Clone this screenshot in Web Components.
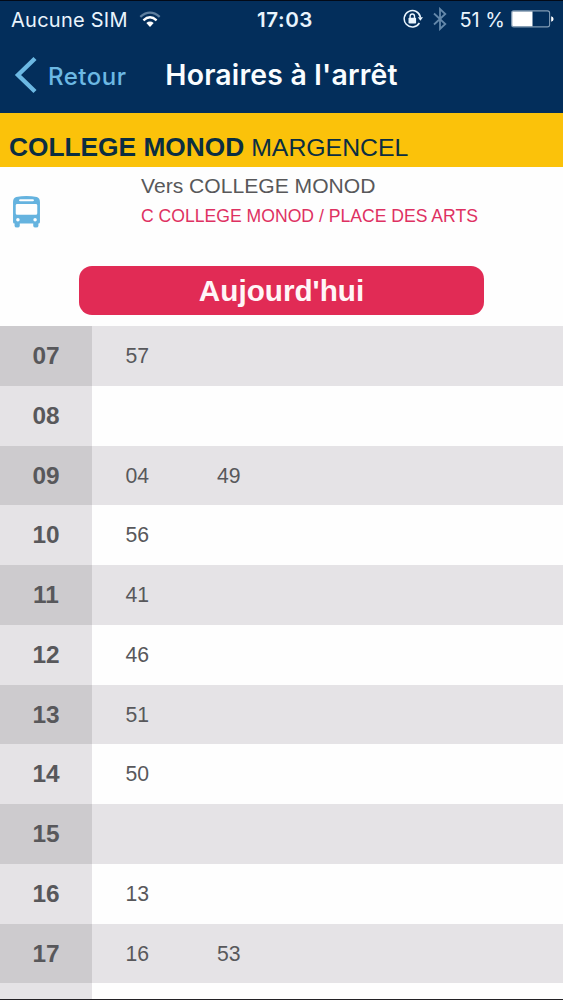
<!DOCTYPE html>
<html lang="fr">
<head>
<meta charset="utf-8">
<title>Horaires à l'arrêt</title>
<style>
    html, body {
        margin: 0;
        height: 1000px;
        overflow: hidden;
        background: #fefefe;
        font-family: "Liberation Sans", Arial, sans-serif;
    }
</style>
</head>
<body>
<app-screen>
    <status-bar slot="top" carrier="Aucune SIM" time="17:03" battery="51"></status-bar>
    <nav-bar slot="top" back="Retour">Horaires à l'arrêt</nav-bar>
    <stop-title city="MARGENCEL">COLLEGE MONOD</stop-title>
    <line-info>
        <span slot="direction">Vers COLLEGE MONOD</span>
        <span slot="line">C COLLEGE MONOD / PLACE DES ARTS</span>
    </line-info>
    <day-button>Aujourd'hui</day-button>
    <time-table></time-table>
</app-screen>

<script>
// Attach an open shadow root holding the given markup
function render (element, html) {
    const template = document.createElement('template');
    template.innerHTML = html;
    element.attachShadow({ mode: 'open' }).appendChild(template.content.cloneNode(true));
}

class AppScreen extends HTMLElement {
    constructor () {
        super();
        render(this, `
            <style>
                :host {
                    display: flex;
                    flex-direction: column;
                    box-sizing: border-box;
                    width: 563px;
                    height: 1000px;
                    overflow: hidden;
                    border-top: 1px solid #020a18;
                    border-bottom: 1px solid #232125;
                }
                header { background: #032e5b; height: 112px; flex: none; }
                main { flex: 1; min-height: 0; }
            </style>
            <header><slot name="top"></slot></header>
            <main><slot></slot></main>
        `);
    }
}

class StatusBar extends HTMLElement {
    constructor () {
        super();
        const battery = this.getAttribute('battery');
        render(this, `
            <style>
                :host {
                    display: grid;
                    grid-template-columns: 1fr auto 1fr;
                    align-items: center;
                    height: 37px;
                    padding: 0 9px 0 11px;
                    color: #e9f4fd;
                    font: 400 20px Inter, sans-serif;
                }
                div { display: flex; align-items: center; }
                svg { display: block; flex: none; }
                .carrier { letter-spacing: 0.25px; }
                .wifi { margin: 0 0 1px 11px; }
                .time { font-size: 20.6px; font-weight: 600; letter-spacing: 0.6px; margin-left: 5px; }
                .right { justify-content: flex-end; }
                .lock { margin-bottom: 2px; }
                .bt { margin: 0 12px 1px 10px; }
                .level { margin-right: 6px; white-space: nowrap; }
                .battery { margin-bottom: 1px; }
            </style>
            <div>
                <span class="carrier">${this.getAttribute('carrier')}</span>
                <svg class="wifi" width="22" height="17" viewBox="0 0 22 17" fill="none" stroke-width="2.3">
                    <path d="M1.3 5.800Q11 -2.500 20.700 5.800" stroke="#5f7f9f"/>
                    <path d="M4.400 9.300Q11 3.200 17.600 9.300" stroke="#fff"/>
                    <path d="M11 16L7.300 11.900Q11 9.100 14.700 11.900Z" fill="#fff"/>
                </svg>
            </div>
            <span class="time">${this.getAttribute('time')}</span>
            <div class="right">
                <svg class="lock" width="20" height="20" viewBox="0 0 20 20" fill="none" stroke="#e9f4fd">
                    <path d="M16.400 14A8.200 8.200 0 1 1 17.500 8.500" stroke-width="1.5"/>
                    <path d="M14.800 8.200H20L17.400 11.700Z" fill="#e9f4fd" stroke="none"/>
                    <rect x="5.500" y="8.700" width="7.600" height="5.800" rx=".8" fill="#e9f4fd" stroke="none"/>
                    <path d="M7.100 8.900V7.200A2.200 2.200 0 0 1 11.500 7.200V8.900" stroke-width="1.400"/>
                </svg>
                <svg class="bt" width="14" height="24" viewBox="0 0 14 24" fill="none" stroke="#6488aa" stroke-width="1.8">
                    <path d="M1 6.500L12.300 17L7 22V2L12.300 7L1 17.500"/>
                </svg>
                <span class="level">${battery} %</span>
                <svg class="battery" width="43" height="18" viewBox="0 0 43 18">
                    <rect x=".6" y=".9" width="38" height="16" rx="2.2" fill="none" stroke="#819bb4" stroke-width="1.1"/>
                    <path d="M2.500 1.500H21.500V16.300H2.500Q1.200 16.300 1.200 15V2.800Q1.200 1.500 2.500 1.500Z" fill="#fff"/>
                    <path d="M40.200 6.200Q42.600 6.800 42.600 9T40.200 11.800Z" fill="#fff"/>
                </svg>
            </div>
        `);
    }
}

class NavBar extends HTMLElement {
    constructor () {
        super();
        render(this, `
            <style>
                :host {
                    display: grid;
                    grid-template-columns: 1fr auto 1fr;
                    align-items: center;
                    height: 75px;
                    padding: 0 14px;
                    font-family: Inter, sans-serif;
                }
                .back {
                    display: flex;
                    align-items: center;
                    gap: 11px;
                    color: #6cb8e3;
                    font-size: 24px;
                    font-weight: 500;
                    letter-spacing: 0.5px;
                }
                .back svg { margin-bottom: 1px; }
                .back span { padding-top: 2px; }
                .title {
                    color: #fafdff;
                    font-size: 28.4px;
                    font-weight: 600;
                    letter-spacing: 0.2px;
                    margin-bottom: 2px;
                }
            </style>
            <div class="back">
                <svg width="23" height="38" viewBox="0 0 23 38" fill="none" stroke="#6cb8e3" stroke-width="4.4">
                    <path d="M21 2.500L4 19L21 35.500"/>
                </svg>
                <span>${this.getAttribute('back')}</span>
            </div>
            <span class="title"><slot></slot></span>
        `);
    }
}

class StopTitle extends HTMLElement {
    constructor () {
        super();
        render(this, `
            <style>
                :host {
                    display: flex;
                    align-items: baseline;
                    box-sizing: border-box;
                    height: 54px;
                    padding: 18px 0 0 9px;
                    background: #fbc20a;
                    color: #0b2e41;
                    font-size: 24.8px;
                    line-height: 32px;
                    white-space: nowrap;
                }
                b { font-size: 26.3px; margin-right: 7px; }
            </style>
            <b><slot></slot></b><span>${this.getAttribute('city')}</span>
        `);
    }
}

class LineInfo extends HTMLElement {
    constructor () {
        super();
        render(this, `
            <style>
                :host {
                    display: grid;
                    grid-template-columns: 129px 1fr;
                    box-sizing: border-box;
                    height: 99px;
                    padding-left: 12px;
                    white-space: nowrap;
                }
                svg { margin-top: 29px; }
                .text { padding-top: 5px; }
                .direction { color: #58585a; font-size: 21.1px; line-height: 28px; }
                .line { color: #de3162; font-size: 17.6px; line-height: 32px; }
            </style>
            <svg width="29" height="32" viewBox="0 0 28 32" preserveAspectRatio="none" fill="#65b3df">
                <path fill-rule="evenodd" d="M4 1Q14 -1 24 1Q27 2 27 6V26Q27 27.500 25.500 27.500V30Q25.500 31.500 23 31.500T20.500 30V27.500H7.500V30Q7.500 31.500 5 31.500T2.500 30V27.500Q1 27.500 1 26V6Q1 2 4 1ZM8 3.300Q6.800 3.300 6.800 4.300T8 5.300H20Q21.200 5.300 21.200 4.300T20 3.300ZM5 8Q3.600 8 3.600 9.300V17.200Q3.600 18.700 5 18.700H23Q24.400 18.700 24.400 17.200V9.300Q24.400 8 23 8ZM5.700 22A1.700 1.700 0 1 0 5.700 25.400A1.700 1.700 0 1 0 5.700 22ZM22.300 22A1.700 1.700 0 1 0 22.300 25.400A1.700 1.700 0 1 0 22.300 22Z"/>
            </svg>
            <div class="text">
                <div class="direction"><slot name="direction"></slot></div>
                <div class="line"><slot name="line"></slot></div>
            </div>
        `);
    }
}

class DayButton extends HTMLElement {
    constructor () {
        super();
        render(this, `
            <style>
                :host { display: block; height: 60px; }
                button {
                    display: block;
                    width: 405px;
                    height: 49px;
                    margin: 0 0 0 79px;
                    padding: 0;
                    border: 0;
                    border-radius: 13px;
                    background: #e12b55;
                    color: #fff5f7;
                    font: bold 29.7px/49px "Liberation Sans", Arial, sans-serif;
                }
            </style>
            <button><slot></slot></button>
        `);
    }
}

class TimeRow extends HTMLElement {
    constructor () {
        super();
        const minutes = (this.getAttribute('minutes') || '').split(' ').filter(Boolean);
        render(this, `
            <style>
                :host {
                    display: grid;
                    grid-template-columns: 92px 1fr;
                    height: 59.78px;
                    line-height: 60px;
                    color: #58585b;
                    background: var(--row, #fefefe);
                }
                .hour {
                    background: var(--hour, #e5e3e6);
                    text-align: center;
                    font-size: 24.4px;
                    font-weight: bold;
                }
                .minutes { display: flex; font-size: 21.2px; }
                .minutes span { width: 90.5px; text-align: center; }
                .minutes span + span { padding-left: 1px; }
            </style>
            <div class="hour">${this.getAttribute('hour')}</div>
            <div class="minutes">${minutes.map((m) => `<span>${m}</span>`).join('')}</div>
        `);
    }
}

class TimeTable extends HTMLElement {
    constructor () {
        super();
        const hours = [
            ['07', '57'],
            ['08', ''],
            ['09', '04 49'],
            ['10', '56'],
            ['11', '41'],
            ['12', '46'],
            ['13', '51'],
            ['14', '50'],
            ['15', ''],
            ['16', '13'],
            ['17', '16 53'],
        ];
        render(this, `
            <style>
                :host { display: block; }
                time-row:nth-of-type(odd) { --row: #e5e3e6; --hour: #cdcbce; }
            </style>
            ${hours.map(([hour, minutes]) => `<time-row hour="${hour}" minutes="${minutes}"></time-row>`).join('')}
            <time-row hour="" minutes=""></time-row>
        `);
    }
}

customElements.define('app-screen', AppScreen);
customElements.define('status-bar', StatusBar);
customElements.define('nav-bar', NavBar);
customElements.define('stop-title', StopTitle);
customElements.define('line-info', LineInfo);
customElements.define('day-button', DayButton);
customElements.define('time-row', TimeRow);
customElements.define('time-table', TimeTable);
</script>
</body>
</html>
